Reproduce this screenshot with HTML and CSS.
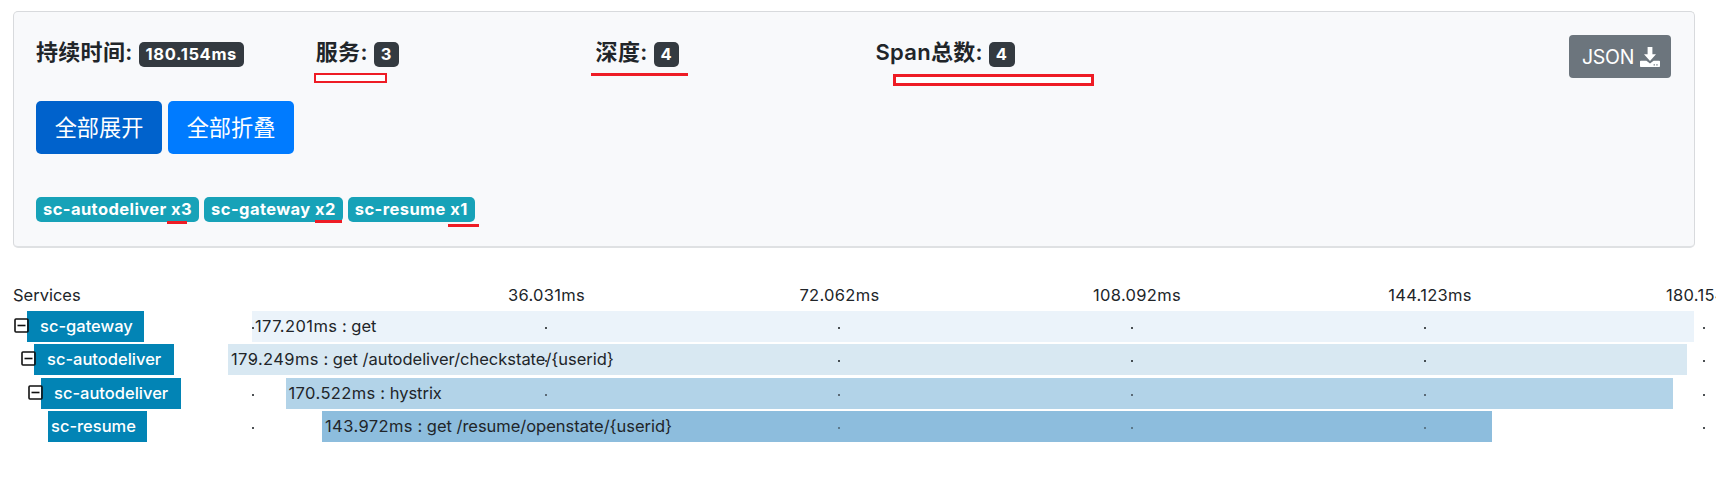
FILE: index.html
```html
<!DOCTYPE html>
<html lang="zh-CN">
<head>
<meta charset="utf-8">
<title>Trace</title>
<link rel="stylesheet" href="styles.css">
</head>
<body>
<section class="card">
  <div class="top">
    <div class="stats">
      <div class="stat"><span class="stat-label">持续时间:</span><span class="badge dark">180.154ms</span></div>
      <div class="stat"><span class="stat-label">服务:</span><span class="badge dark">3</span></div>
      <div class="stat"><span class="stat-label">深度:</span><span class="badge dark">4</span></div>
      <div class="stat"><span class="stat-label">Span总数:</span><span class="badge dark">4</span></div>
    </div>
    <button class="json"><span>JSON</span>
      <svg class="download" viewBox="0 0 20 20"><path fill="#fff" d="M7.6 0h4.8v7.2H16L10 14 4 7.2h3.6zM.8 13.8h5.6L10 16.6l3.600-2.800H19.200q.8 0 .8.8v4.600q0 .8-.8.8H.8q-.8 0-.8-.8v-4.600q0-.8.8-.8z"/><path fill="#6c757d" d="M13.6 17.200h1.300v1.300h-1.300zM16.300 17.200h1.300v1.300h-1.300z"/></svg>
    </button>
  </div>
  <div class="actions">
    <button class="btn active">全部展开</button>
    <button class="btn">全部折叠</button>
  </div>
  <div class="services">
    <span class="badge info">sc-autodeliver x3</span>
    <span class="badge info">sc-gateway x2</span>
    <span class="badge info">sc-resume x1</span>
  </div>
  <i class="mark box m1"></i>
  <i class="mark m2"></i>
  <i class="mark box m3"></i>
  <i class="mark m4"></i>
  <i class="mark m5"></i>
  <i class="mark m6"></i>
</section>

<section class="timeline">
  <div class="axis">
    <span class="axis-title">Services</span>
    <span class="tick">36.031ms</span>
    <span class="tick">72.062ms</span>
    <span class="tick wide">108.092ms</span>
    <span class="tick wide">144.123ms</span>
    <span class="tick last">180.154ms</span>
  </div>
  <div class="row">
    <div class="name-col d0"><svg class="toggle" viewBox="0 0 15 15"><rect x="1" y="1" width="13" height="13" rx="1"/><path d="M3.5 7.5h8"/></svg><span class="name n1">sc-gateway</span></div>
    <div class="track"><div class="bar b1" style="margin-left:24px;width:1442px"><span class="time">177.201ms</span> : get</div></div>
    <div class="dots"><i></i><i></i><i></i><i></i><i></i><i></i></div>
  </div>
  <div class="row">
    <div class="name-col d1"><svg class="toggle" viewBox="0 0 15 15"><rect x="1" y="1" width="13" height="13" rx="1"/><path d="M3.5 7.5h8"/></svg><span class="name n2">sc-autodeliver</span></div>
    <div class="track"><div class="bar b2" style="margin-left:0;width:1458.5px"><span class="time">179.249ms</span> : get /autodeliver/checkstate/{userid}</div></div>
    <div class="dots"><i></i><i></i><i></i><i></i><i></i><i></i></div>
  </div>
  <div class="row">
    <div class="name-col d2"><svg class="toggle" viewBox="0 0 15 15"><rect x="1" y="1" width="13" height="13" rx="1"/><path d="M3.5 7.5h8"/></svg><span class="name n2">sc-autodeliver</span></div>
    <div class="track"><div class="bar b3" style="margin-left:57.5px;width:1387.5px"><span class="time">170.522ms</span> : hystrix</div></div>
    <div class="dots soft"><i></i><i></i><i></i><i></i><i></i><i></i></div>
  </div>
  <div class="row">
    <div class="name-col d3"><span class="name n4">sc-resume</span></div>
    <div class="track"><div class="bar b4" style="margin-left:94px;width:1170px"><span class="time">143.972ms</span> : get /resume/openstate/{userid}</div></div>
    <div class="dots softer"><i></i><i></i><i></i><i></i><i></i><i></i></div>
  </div>
</section>
</body>
</html>
```
FILE: styles.css
```css
* { box-sizing: border-box; }
body {
  margin: 0;
  padding: 11px 0 0 13px;
  height: 480px;
  overflow: hidden;
  background: #fff;
  color: #212529;
  font-family: Inter, "Noto Sans CJK SC", sans-serif;
  font-size: 16.5px;
}
button { border: 0; margin: 0; font-family: inherit; color: #fff; }

.card {
  position: relative;
  width: 1682px;
  height: 237px;
  padding: 23px 22px 0 22px;
  background: #f8f9fb;
  border: 1px solid #d8dadd;
  border-bottom-width: 2px;
  border-bottom-color: #dfe1e3;
  border-radius: 5px;
}
.top { display: flex; justify-content: space-between; height: 66px; }
.stats { display: grid; grid-template-columns: repeat(4, 279.8px); align-items: start; }
.stat { display: flex; align-items: flex-start; gap: 6px; height: 34px; }
.stat-label { font-size: 22px; font-weight: 600; line-height: 34px; height: 34px; letter-spacing: .3px; white-space: nowrap; }
.badge {
  display: block;
  height: 25px;
  line-height: 25px;
  padding: 0 7px;
  border-radius: 5px;
  color: #fff;
  font-size: 16.5px;
  font-weight: 700;
  letter-spacing: .42px;
  white-space: nowrap;
}
.dark { background: #343a40; margin-top: 7px; letter-spacing: .65px; }
.info { background: #17a2b8; }
.json {
  display: flex;
  align-items: center;
  gap: 6px;
  width: 102px;
  height: 43px;
  margin-right: 1px;
  padding: 0 12px 0 13px;
  border-radius: 4px;
  background: #6c757d;
  font-size: 19.5px;
}
.json span { letter-spacing: -.3px; }
.download { width: 20px; height: 20px; flex: none; }

.actions { display: flex; gap: 6px; }
.btn {
  width: 126px;
  height: 53px;
  border-radius: 5px;
  background: #007bff;
  font-size: 22.2px;
  padding: 0 0 4px;
}
.btn.active { background: #0062cc; }
.services { display: flex; gap: 5px; margin-top: 43px; }

.mark { position: absolute; height: 3px; background: #ee1c25; }
.mark.box { background: #fff; border: 2px solid #ee1c25; }
.m1 { left: 300px; top: 61px; width: 73px; height: 10px; }
.m2 { left: 577px; top: 61px; width: 97px; }
.mark.m3 { left: 879px; top: 62px; width: 201px; height: 12px; border-width: 3px; }
.m4 { left: 153px; top: 209px; width: 20px; }
.m5 { left: 301px; top: 208px; width: 27px; }
.m6 { left: 434px; top: 212px; width: 31px; }

.timeline { margin-top: 33px; width: 1703px; overflow: hidden; }
.axis {
  display: grid;
  grid-template-columns: 387px 293px 293px 293px 293px 144px;
  height: 30px;
  line-height: 28px;
}
.tick { text-align: center; letter-spacing: .3px; }
.tick.wide { padding-left: 9px; }
.tick.last { text-align: left; padding-left: 94px; }
.row {
  position: relative;
  display: grid;
  grid-template-columns: 215px 1fr;
  height: 31px;
  margin-bottom: 2.4px;
}
.name-col { display: flex; align-items: flex-start; }
.d1 { padding-left: 7px; }
.d2 { padding-left: 14px; }
.d3 { padding-left: 35px; }
.toggle {
  position: relative;
  z-index: 1;
  width: 15px;
  height: 15px;
  margin: 7px -1px 0 1px;
  flex: none;
  fill: none;
  stroke: #111;
  stroke-width: 1.6;
}
.toggle + .name { margin-left: -1px; padding-left: 13px; }
.name {
  height: 31px;
  line-height: 30px;
  padding-left: 3px;
  background: #0284b5;
  color: #fff;
  font-weight: 500;
  white-space: nowrap;
}
.n1 { width: 117px; }
.n2 { width: 140px; }
.n4 { width: 99px; }
.bar { height: 31px; line-height: 30px; padding-left: 3px; letter-spacing: -.03px; white-space: nowrap; }
.time { letter-spacing: .4px; }
.b1 { background: #ebf3fa; }
.b2 { background: #d8e8f2; }
.b3 { background: #b2d3e8; }
.b4 { background: #8dbddd; }
.dots {
  position: absolute;
  left: 239px;
  top: 16px;
  width: 1453px;
  display: grid;
  grid-template-columns: repeat(4, 293.1px) 279px 2px;
}
.dots i { width: 2px; height: 2px; background: #212529; opacity: .8; }
.soft i:nth-child(n+2):nth-child(-n+5) { opacity: .6; }
.softer i:nth-child(n+3):nth-child(-n+5) { opacity: .45; }
.softer i:nth-child(2) { opacity: .2; }
```
